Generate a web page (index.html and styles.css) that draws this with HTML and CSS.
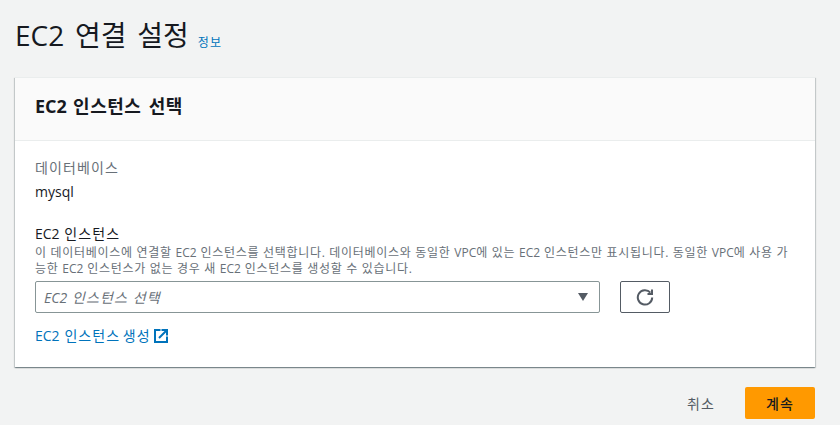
FILE: index.html
```html
<!DOCTYPE html>
<html lang="ko">
<head>
<meta charset="utf-8">
<title>EC2 연결 설정</title>
<link rel="stylesheet" href="styles.css">
</head>
<body>
<header class="page-head">
  <h1 class="title">EC2 연결 설정</h1>
  <a class="info" href="#">정보</a>
</header>
<section class="card">
  <div class="card-head"><h2 class="card-title"><span class="en">EC2</span> <span class="wide">인스턴스 선택</span></h2></div>
  <div class="card-body">
    <div class="field-db">
      <div class="db-label">데이터베이스</div>
      <div class="db-value en">mysql</div>
    </div>
    <div class="field-label"><span class="en">EC2</span> 인스턴스</div>
    <p class="desc">이 데이터베이스에 연결할 <span class="en">EC2</span> 인스턴스를 선택합니다. 데이터베이스와 동일한 <span class="en">VPC</span>에 있는 <span class="en">EC2</span> 인스턴스만 표시됩니다. 동일한 <span class="en">VPC</span>에 사용 가능한 <span class="en">EC2</span> 인스턴스가 없는 경우 새 <span class="en">EC2</span> 인스턴스를 생성할 수 있습니다.</p>
    <div class="select-row">
      <div class="select">
        <span class="placeholder"><span class="en">EC2</span> 인스턴스 선택</span>
        <span class="caret"></span>
      </div>
      <button class="refresh" type="button" aria-label="새로 고침">
        <svg width="18" height="18" viewBox="0 0 18 18" fill="none" stroke="#545b64" stroke-width="2"><path d="M14.4 4.6A7.2 7.2 0 1 0 16.2 9.5"/><path d="M16 1.5V6h-4.5"/></svg>
      </button>
    </div>
    <a class="create" href="#"><span class="create-text"><span class="en">EC2</span> <span class="tight">인스턴스 생성</span></span>
      <svg class="ext" width="14" height="14" viewBox="0 0 14 14" fill="none" stroke="#0073bb" stroke-width="2"><path d="M6.5 1H1v12h12V7.5"/><path d="M5 9 12 2M7.5 1H13v5.5"/></svg>
    </a>
  </div>
</section>
<footer class="actions">
  <button class="cancel" type="button">취소</button>
  <button class="next" type="button">계속</button>
</footer>
</body>
</html>
```
FILE: styles.css
```css
* { box-sizing: border-box; }
html, body { height: 100%; }
body {
  margin: 0;
  padding: 0 25px 0 15px;
  background: #f2f3f3;
  color: #16191f;
  font-family: "Open Sans", "Noto Sans CJK KR", sans-serif;
  font-size: 14px;
  letter-spacing: .08em;
  overflow: hidden;
}
.en { letter-spacing: 0; }
.wide { word-spacing: 2px; }
.tight { word-spacing: -2.5px; }
.page-head { display: flex; align-items: baseline; height: 77px; padding-top: 13px; gap: 9px; }
.title { margin: 0; font-size: 28px; line-height: 44px; font-weight: 400; letter-spacing: 0; word-spacing: 3.5px; color: #16191f; }
.info { font-size: 12px; color: #0073bb; text-decoration: none; position: relative; top: 1px; }
.card {
  background: #fff;
  border-top: 1px solid #eaeded;
  box-shadow: 0 1px 1px 0 rgba(0,28,36,.3), 1px 1px 1px 0 rgba(0,28,36,.15), -1px 1px 1px 0 rgba(0,28,36,.15);
}
.card-head { height: 63px; background: #fafafa; border-bottom: 1px solid #eaeded; padding: 0 20px 7px; display: flex; align-items: center; }
.card-title { margin: 0; font-size: 18px; line-height: 22px; font-weight: 700; letter-spacing: .03em; word-spacing: 1px; color: #16191f; }
.card-body { padding: 16px 20px 0; height: 226px; }
.field-db { height: 67px; }
.db-label { font-size: 14px; line-height: 22px; color: #687078; }
.db-value { font-size: 14px; line-height: 22px; margin-top: 2px; color: #16191f; }
.field-label { font-size: 14px; line-height: 20px; color: #16191f; }
.desc { margin: 1px 0 0; font-size: 12px; line-height: 16px; letter-spacing: .058em; color: #687078; width: 757px; }
.select-row { display: flex; gap: 20px; margin-top: 4px; }
.select {
  width: 565px; height: 32px;
  border: 1px solid #879596; border-radius: 2px;
  display: flex; align-items: center; justify-content: space-between;
  padding: 0 11px 0 8px;
}
.placeholder { font-size: 14px; font-style: italic; color: #687078; }
.caret { width: 0; height: 0; border-left: 5.5px solid transparent; border-right: 5.5px solid transparent; border-top: 8px solid #545b64; }
.refresh {
  width: 50px; height: 32px; padding: 0;
  background: #fff; border: 1px solid #545b64; border-radius: 2px;
  display: flex; align-items: center; justify-content: center;
}
.create { display: inline-flex; align-items: center; gap: 3px; margin-top: 13px; font-size: 14px; line-height: 20px; color: #0073bb; text-decoration: none; }
.actions { display: flex; justify-content: flex-end; align-items: center; gap: 30px; margin-top: 20px; }
.cancel { border: 0; background: none; padding: 0; font: inherit; letter-spacing: inherit; color: #545b64; }
.next { width: 70px; height: 32px; border: 0; border-radius: 2px; background: #ff9900; color: #16191f; font: inherit; letter-spacing: inherit; font-weight: 500; padding: 0; }
```
